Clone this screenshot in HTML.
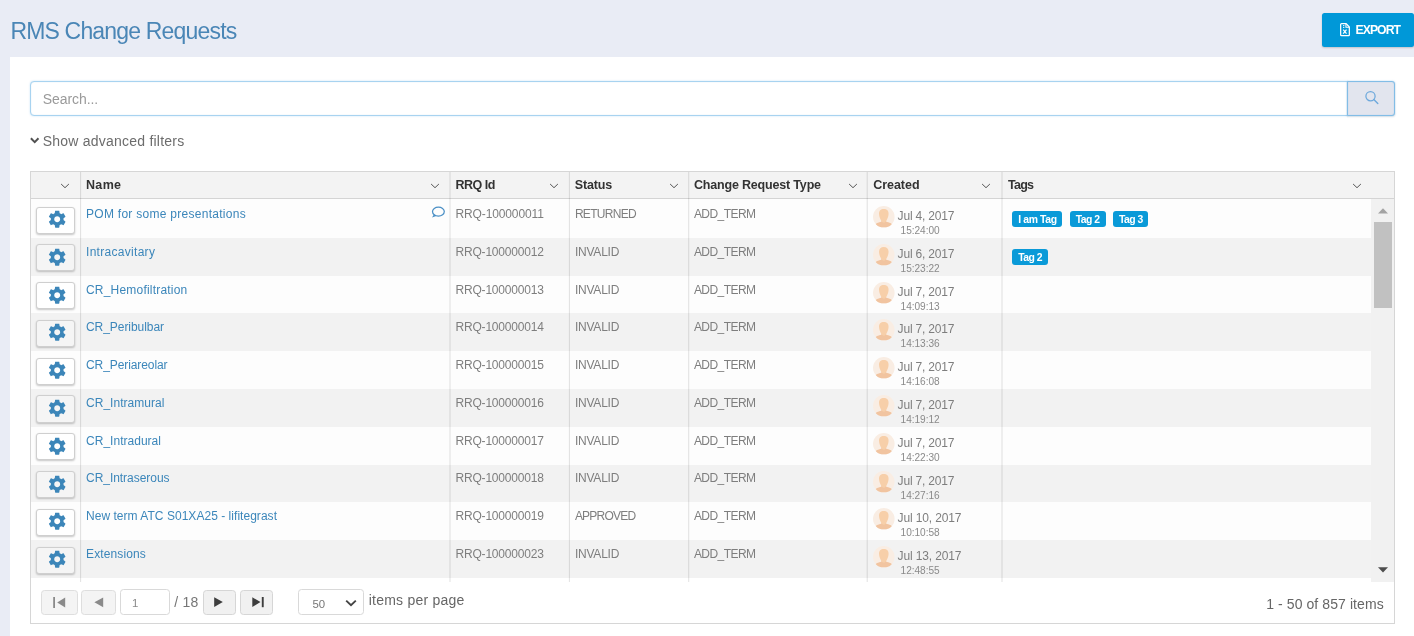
<!DOCTYPE html><html lang="en"><head><meta charset="utf-8"><title>RMS Change Requests</title><style>
html,body{margin:0;padding:0}
body{width:1414px;height:636px;overflow:hidden;background:#e9ecf5;font-family:"Liberation Sans", Arial, sans-serif;position:relative}
.a{position:absolute}
.txt{left:0;top:0;width:1414px;height:636px}
.all{left:0;top:0;width:1460px;height:680px;will-change:transform;filter:blur(.45px)}
.t{position:absolute;white-space:pre;line-height:20px;height:20px}
.panel{left:10px;top:57px;width:1440px;height:613px;background:#fff}
.export{left:1321.6px;top:12.5px;width:92.4px;height:34.6px;background:#0098d8;border-radius:2.5px;box-shadow:0 1px 2px rgba(0,0,0,.18)}
.search{left:30px;top:81px;width:1318px;height:35px;box-sizing:border-box;border:1px solid #a8d3f0;border-radius:4px 0 0 4px;background:#fff;box-shadow:0 0 2px rgba(125,188,235,.45),inset 0 0 1px rgba(125,188,235,.5)}
.sbtn{left:1347.2px;top:81.3px;width:47.8px;height:34.9px;box-sizing:border-box;border:1px solid #82bde6;border-radius:0 3px 3px 0;background:#e2e5ee;box-shadow:0 0 1.5px rgba(110,180,232,.7),inset 0 0 1px rgba(110,180,232,.6),0 1px 2px rgba(0,0,0,.1)}
.grid{left:30.0px;top:171.0px;width:1365.0px;height:453.0px;box-sizing:border-box;border:1px solid #d6d6d6;background:#fff}
.hdr{left:31.0px;top:172.0px;width:1363.0px;height:26.2px;background:#f3f3f3;border-bottom:1px solid #d4d4d4}
.row{left:31.0px;width:1340.3px;height:37.79px}
.r0{background:#fdfdfd} .r1{background:#f2f2f2}
.vl{width:1px;background:#dadada}
.gbtn{left:36.3px;width:38.9px;height:27.2px;box-sizing:border-box;border:1px solid #cfcfcf;border-radius:3px;background:#fff;box-shadow:0 1px 2px rgba(0,0,0,.22)}
.r1 + .gbtn{background:#f4f4f4}
.tag{height:15.8px;background:#0a9ad8;border-radius:3px}
.sb{left:1371.3px;top:199px;width:23.100000000000044px;height:382.6px;background:#f1f1f1}
.thumb{left:1374.2px;top:221.6px;width:17.8px;height:86.2px;background:#c1c1c1}
.pb{top:589.6px;height:25px;box-sizing:border-box;border:1px solid #dedede;border-radius:3.5px;background:#f4f4f4}
.pi{background:#fff;border-color:#d9d9d9;top:589.3px;height:26.1px}
svg{position:absolute;overflow:visible}

</style></head><body><div class="a all">
<div class="a panel"></div>
<div class="a export"></div>
<svg style="left:1339.7px;top:22.5px" width="10" height="13.4" viewBox="0 0 10.6 13.4" preserveAspectRatio="none"><path d="M1.6 .7H6.6L9.9 4V11.9Q9.9 12.7 9.1 12.7H1.6Q.7 12.7 .7 11.9V1.5Q.7 .7 1.6 .7Z" fill="none" stroke="#fff" stroke-width="1.3" stroke-linejoin="round"/><path d="M6.3 .9V4.2H9.7" fill="none" stroke="#fff" stroke-width="1.1"/><path d="M3.4 6.6L6.9 10.6M6.9 6.6L3.4 10.6" stroke="#fff" stroke-width="1.3"/><path d="M3.2 2.6H4.6M3.2 4.4H4.6" stroke="#fff" stroke-width="1"/></svg>
<div class="a search"></div><div class="a sbtn"></div>
<svg style="left:1363px;top:89px" width="18" height="18" viewBox="0 0 18 18"><circle cx="7.5" cy="7.2" r="4.6" fill="none" stroke="#6ea9dc" stroke-width="1.25"/><path d="M10.8 10.5L14.8 14.5" stroke="#6ea9dc" stroke-width="1.4" stroke-linecap="round"/></svg>
<svg style="left:29.9px;top:137.4px" width="9.4" height="7" viewBox="0 0 9.4 7"><path d="M.9 1.3L4.7 5.1L8.5 1.3" fill="none" stroke="#505050" stroke-width="2"/></svg>
<div class="a grid"></div><div class="a hdr"></div>
<div class="a row r0" style="top:199.00px;height:38.89px"></div>
<div class="a gbtn" style="top:206.50px"></div>
<svg style="left:46.8px;top:209.10px" width="20.4" height="20.4" viewBox="0 0 24 24"><path fill="#3c86b9" d="M19.43 12.98c.04-.32.07-.64.07-.98s-.03-.66-.07-.98l2.11-1.65c.19-.15.24-.42.12-.64l-2-3.46c-.12-.22-.39-.3-.61-.22l-2.49 1c-.52-.4-1.08-.73-1.69-.98l-.38-2.65C14.46 2.18 14.25 2 14 2h-4c-.25 0-.46.18-.49.42l-.38 2.65c-.61.25-1.17.59-1.69.98l-2.49-1c-.23-.09-.49 0-.61.22l-2 3.46c-.13.22-.07.49.12.64l2.11 1.65c-.04.32-.07.65-.07.98s.03.66.07.98l-2.11 1.65c-.19.15-.24.42-.12.64l2 3.46c.12.22.39.3.61.22l2.49-1c.52.4 1.08.73 1.69.98l.38 2.65c.03.24.24.42.49.42h4c.25 0 .46-.18.49-.42l.38-2.65c.61-.25 1.17-.59 1.69-.98l2.49 1c.23.09.49 0 .61-.22l2-3.46c.12-.22.07-.49-.12-.64l-2.11-1.65zM12 15.5c-1.93 0-3.5-1.57-3.5-3.5s1.57-3.5 3.5-3.5 3.5 1.57 3.5 3.5-1.57 3.5-3.5 3.5z"/></svg>
<svg style="left:873.35px;top:206.10px" width="21.6" height="21.6" viewBox="0 0 40 40"><defs><clipPath id="c0"><circle cx="20" cy="20" r="20"/></clipPath></defs><circle cx="20" cy="20" r="20" fill="#f9ede3"/><g clip-path="url(#c0)"><path d="M2.5 40C2.5 33 7.5 31.3 14 29.8C16 29.3 16.2 27 16 25H24C23.8 27 24 29.3 26 29.8C32.5 31.3 37.5 33 37.5 40Z" fill="#f1c4a0"/><path d="M20 5.6C25.6 5.6 29.3 9 28.8 15.5C28.4 21 26.6 24 25 26.8C24 28.8 22.3 31 20 31C17.7 31 16 28.8 15 26.8C13.4 24 11.6 21 11.2 15.5C10.7 9 14.4 5.6 20 5.6Z" fill="#f7cfa9"/></g></svg>
<div class="a row r1" style="top:237.89px"></div>
<div class="a gbtn" style="top:244.29px;background:#f5f5f5"></div>
<svg style="left:46.8px;top:246.89px" width="20.4" height="20.4" viewBox="0 0 24 24"><path fill="#3c86b9" d="M19.43 12.98c.04-.32.07-.64.07-.98s-.03-.66-.07-.98l2.11-1.65c.19-.15.24-.42.12-.64l-2-3.46c-.12-.22-.39-.3-.61-.22l-2.49 1c-.52-.4-1.08-.73-1.69-.98l-.38-2.65C14.46 2.18 14.25 2 14 2h-4c-.25 0-.46.18-.49.42l-.38 2.65c-.61.25-1.17.59-1.69.98l-2.49-1c-.23-.09-.49 0-.61.22l-2 3.46c-.13.22-.07.49.12.64l2.11 1.65c-.04.32-.07.65-.07.98s.03.66.07.98l-2.11 1.65c-.19.15-.24.42-.12.64l2 3.46c.12.22.39.3.61.22l2.49-1c.52.4 1.08.73 1.69.98l.38 2.65c.03.24.24.42.49.42h4c.25 0 .46-.18.49-.42l.38-2.65c.61-.25 1.17-.59 1.69-.98l2.49 1c.23.09.49 0 .61-.22l2-3.46c.12-.22.07-.49-.12-.64l-2.11-1.65zM12 15.5c-1.93 0-3.5-1.57-3.5-3.5s1.57-3.5 3.5-3.5 3.5 1.57 3.5 3.5-1.57 3.5-3.5 3.5z"/></svg>
<svg style="left:873.35px;top:243.89px" width="21.6" height="21.6" viewBox="0 0 40 40"><defs><clipPath id="c1"><circle cx="20" cy="20" r="20"/></clipPath></defs><circle cx="20" cy="20" r="20" fill="#f9ede3"/><g clip-path="url(#c1)"><path d="M2.5 40C2.5 33 7.5 31.3 14 29.8C16 29.3 16.2 27 16 25H24C23.8 27 24 29.3 26 29.8C32.5 31.3 37.5 33 37.5 40Z" fill="#f1c4a0"/><path d="M20 5.6C25.6 5.6 29.3 9 28.8 15.5C28.4 21 26.6 24 25 26.8C24 28.8 22.3 31 20 31C17.7 31 16 28.8 15 26.8C13.4 24 11.6 21 11.2 15.5C10.7 9 14.4 5.6 20 5.6Z" fill="#f7cfa9"/></g></svg>
<div class="a row r0" style="top:275.68px"></div>
<div class="a gbtn" style="top:282.08px"></div>
<svg style="left:46.8px;top:284.68px" width="20.4" height="20.4" viewBox="0 0 24 24"><path fill="#3c86b9" d="M19.43 12.98c.04-.32.07-.64.07-.98s-.03-.66-.07-.98l2.11-1.65c.19-.15.24-.42.12-.64l-2-3.46c-.12-.22-.39-.3-.61-.22l-2.49 1c-.52-.4-1.08-.73-1.69-.98l-.38-2.65C14.46 2.18 14.25 2 14 2h-4c-.25 0-.46.18-.49.42l-.38 2.65c-.61.25-1.17.59-1.69.98l-2.49-1c-.23-.09-.49 0-.61.22l-2 3.46c-.13.22-.07.49.12.64l2.11 1.65c-.04.32-.07.65-.07.98s.03.66.07.98l-2.11 1.65c-.19.15-.24.42-.12.64l2 3.46c.12.22.39.3.61.22l2.49-1c.52.4 1.08.73 1.69.98l.38 2.65c.03.24.24.42.49.42h4c.25 0 .46-.18.49-.42l.38-2.65c.61-.25 1.17-.59 1.69-.98l2.49 1c.23.09.49 0 .61-.22l2-3.46c.12-.22.07-.49-.12-.64l-2.11-1.65zM12 15.5c-1.93 0-3.5-1.57-3.5-3.5s1.57-3.5 3.5-3.5 3.5 1.57 3.5 3.5-1.57 3.5-3.5 3.5z"/></svg>
<svg style="left:873.35px;top:281.68px" width="21.6" height="21.6" viewBox="0 0 40 40"><defs><clipPath id="c2"><circle cx="20" cy="20" r="20"/></clipPath></defs><circle cx="20" cy="20" r="20" fill="#f9ede3"/><g clip-path="url(#c2)"><path d="M2.5 40C2.5 33 7.5 31.3 14 29.8C16 29.3 16.2 27 16 25H24C23.8 27 24 29.3 26 29.8C32.5 31.3 37.5 33 37.5 40Z" fill="#f1c4a0"/><path d="M20 5.6C25.6 5.6 29.3 9 28.8 15.5C28.4 21 26.6 24 25 26.8C24 28.8 22.3 31 20 31C17.7 31 16 28.8 15 26.8C13.4 24 11.6 21 11.2 15.5C10.7 9 14.4 5.6 20 5.6Z" fill="#f7cfa9"/></g></svg>
<div class="a row r1" style="top:313.47px"></div>
<div class="a gbtn" style="top:319.87px;background:#f5f5f5"></div>
<svg style="left:46.8px;top:322.47px" width="20.4" height="20.4" viewBox="0 0 24 24"><path fill="#3c86b9" d="M19.43 12.98c.04-.32.07-.64.07-.98s-.03-.66-.07-.98l2.11-1.65c.19-.15.24-.42.12-.64l-2-3.46c-.12-.22-.39-.3-.61-.22l-2.49 1c-.52-.4-1.08-.73-1.69-.98l-.38-2.65C14.46 2.18 14.25 2 14 2h-4c-.25 0-.46.18-.49.42l-.38 2.65c-.61.25-1.17.59-1.69.98l-2.49-1c-.23-.09-.49 0-.61.22l-2 3.46c-.13.22-.07.49.12.64l2.11 1.65c-.04.32-.07.65-.07.98s.03.66.07.98l-2.11 1.65c-.19.15-.24.42-.12.64l2 3.46c.12.22.39.3.61.22l2.49-1c.52.4 1.08.73 1.69.98l.38 2.65c.03.24.24.42.49.42h4c.25 0 .46-.18.49-.42l.38-2.65c.61-.25 1.17-.59 1.69-.98l2.49 1c.23.09.49 0 .61-.22l2-3.46c.12-.22.07-.49-.12-.64l-2.11-1.65zM12 15.5c-1.93 0-3.5-1.57-3.5-3.5s1.57-3.5 3.5-3.5 3.5 1.57 3.5 3.5-1.57 3.5-3.5 3.5z"/></svg>
<svg style="left:873.35px;top:319.47px" width="21.6" height="21.6" viewBox="0 0 40 40"><defs><clipPath id="c3"><circle cx="20" cy="20" r="20"/></clipPath></defs><circle cx="20" cy="20" r="20" fill="#f9ede3"/><g clip-path="url(#c3)"><path d="M2.5 40C2.5 33 7.5 31.3 14 29.8C16 29.3 16.2 27 16 25H24C23.8 27 24 29.3 26 29.8C32.5 31.3 37.5 33 37.5 40Z" fill="#f1c4a0"/><path d="M20 5.6C25.6 5.6 29.3 9 28.8 15.5C28.4 21 26.6 24 25 26.8C24 28.8 22.3 31 20 31C17.7 31 16 28.8 15 26.8C13.4 24 11.6 21 11.2 15.5C10.7 9 14.4 5.6 20 5.6Z" fill="#f7cfa9"/></g></svg>
<div class="a row r0" style="top:351.26px"></div>
<div class="a gbtn" style="top:357.66px"></div>
<svg style="left:46.8px;top:360.26px" width="20.4" height="20.4" viewBox="0 0 24 24"><path fill="#3c86b9" d="M19.43 12.98c.04-.32.07-.64.07-.98s-.03-.66-.07-.98l2.11-1.65c.19-.15.24-.42.12-.64l-2-3.46c-.12-.22-.39-.3-.61-.22l-2.49 1c-.52-.4-1.08-.73-1.69-.98l-.38-2.65C14.46 2.18 14.25 2 14 2h-4c-.25 0-.46.18-.49.42l-.38 2.65c-.61.25-1.17.59-1.69.98l-2.49-1c-.23-.09-.49 0-.61.22l-2 3.46c-.13.22-.07.49.12.64l2.11 1.65c-.04.32-.07.65-.07.98s.03.66.07.98l-2.11 1.65c-.19.15-.24.42-.12.64l2 3.46c.12.22.39.3.61.22l2.49-1c.52.4 1.08.73 1.69.98l.38 2.65c.03.24.24.42.49.42h4c.25 0 .46-.18.49-.42l.38-2.65c.61-.25 1.17-.59 1.69-.98l2.49 1c.23.09.49 0 .61-.22l2-3.46c.12-.22.07-.49-.12-.64l-2.11-1.65zM12 15.5c-1.93 0-3.5-1.57-3.5-3.5s1.57-3.5 3.5-3.5 3.5 1.57 3.5 3.5-1.57 3.5-3.5 3.5z"/></svg>
<svg style="left:873.35px;top:357.26px" width="21.6" height="21.6" viewBox="0 0 40 40"><defs><clipPath id="c4"><circle cx="20" cy="20" r="20"/></clipPath></defs><circle cx="20" cy="20" r="20" fill="#f9ede3"/><g clip-path="url(#c4)"><path d="M2.5 40C2.5 33 7.5 31.3 14 29.8C16 29.3 16.2 27 16 25H24C23.8 27 24 29.3 26 29.8C32.5 31.3 37.5 33 37.5 40Z" fill="#f1c4a0"/><path d="M20 5.6C25.6 5.6 29.3 9 28.8 15.5C28.4 21 26.6 24 25 26.8C24 28.8 22.3 31 20 31C17.7 31 16 28.8 15 26.8C13.4 24 11.6 21 11.2 15.5C10.7 9 14.4 5.6 20 5.6Z" fill="#f7cfa9"/></g></svg>
<div class="a row r1" style="top:389.05px"></div>
<div class="a gbtn" style="top:395.45px;background:#f5f5f5"></div>
<svg style="left:46.8px;top:398.05px" width="20.4" height="20.4" viewBox="0 0 24 24"><path fill="#3c86b9" d="M19.43 12.98c.04-.32.07-.64.07-.98s-.03-.66-.07-.98l2.11-1.65c.19-.15.24-.42.12-.64l-2-3.46c-.12-.22-.39-.3-.61-.22l-2.49 1c-.52-.4-1.08-.73-1.69-.98l-.38-2.65C14.46 2.18 14.25 2 14 2h-4c-.25 0-.46.18-.49.42l-.38 2.65c-.61.25-1.17.59-1.69.98l-2.49-1c-.23-.09-.49 0-.61.22l-2 3.46c-.13.22-.07.49.12.64l2.11 1.65c-.04.32-.07.65-.07.98s.03.66.07.98l-2.11 1.65c-.19.15-.24.42-.12.64l2 3.46c.12.22.39.3.61.22l2.49-1c.52.4 1.08.73 1.69.98l.38 2.65c.03.24.24.42.49.42h4c.25 0 .46-.18.49-.42l.38-2.65c.61-.25 1.17-.59 1.69-.98l2.49 1c.23.09.49 0 .61-.22l2-3.46c.12-.22.07-.49-.12-.64l-2.11-1.65zM12 15.5c-1.93 0-3.5-1.57-3.5-3.5s1.57-3.5 3.5-3.5 3.5 1.57 3.5 3.5-1.57 3.5-3.5 3.5z"/></svg>
<svg style="left:873.35px;top:395.05px" width="21.6" height="21.6" viewBox="0 0 40 40"><defs><clipPath id="c5"><circle cx="20" cy="20" r="20"/></clipPath></defs><circle cx="20" cy="20" r="20" fill="#f9ede3"/><g clip-path="url(#c5)"><path d="M2.5 40C2.5 33 7.5 31.3 14 29.8C16 29.3 16.2 27 16 25H24C23.8 27 24 29.3 26 29.8C32.5 31.3 37.5 33 37.5 40Z" fill="#f1c4a0"/><path d="M20 5.6C25.6 5.6 29.3 9 28.8 15.5C28.4 21 26.6 24 25 26.8C24 28.8 22.3 31 20 31C17.7 31 16 28.8 15 26.8C13.4 24 11.6 21 11.2 15.5C10.7 9 14.4 5.6 20 5.6Z" fill="#f7cfa9"/></g></svg>
<div class="a row r0" style="top:426.84px"></div>
<div class="a gbtn" style="top:433.24px"></div>
<svg style="left:46.8px;top:435.84px" width="20.4" height="20.4" viewBox="0 0 24 24"><path fill="#3c86b9" d="M19.43 12.98c.04-.32.07-.64.07-.98s-.03-.66-.07-.98l2.11-1.65c.19-.15.24-.42.12-.64l-2-3.46c-.12-.22-.39-.3-.61-.22l-2.49 1c-.52-.4-1.08-.73-1.69-.98l-.38-2.65C14.46 2.18 14.25 2 14 2h-4c-.25 0-.46.18-.49.42l-.38 2.65c-.61.25-1.17.59-1.69.98l-2.49-1c-.23-.09-.49 0-.61.22l-2 3.46c-.13.22-.07.49.12.64l2.11 1.65c-.04.32-.07.65-.07.98s.03.66.07.98l-2.11 1.65c-.19.15-.24.42-.12.64l2 3.46c.12.22.39.3.61.22l2.49-1c.52.4 1.08.73 1.69.98l.38 2.65c.03.24.24.42.49.42h4c.25 0 .46-.18.49-.42l.38-2.65c.61-.25 1.17-.59 1.69-.98l2.49 1c.23.09.49 0 .61-.22l2-3.46c.12-.22.07-.49-.12-.64l-2.11-1.65zM12 15.5c-1.93 0-3.5-1.57-3.5-3.5s1.57-3.5 3.5-3.5 3.5 1.57 3.5 3.5-1.57 3.5-3.5 3.5z"/></svg>
<svg style="left:873.35px;top:432.84px" width="21.6" height="21.6" viewBox="0 0 40 40"><defs><clipPath id="c6"><circle cx="20" cy="20" r="20"/></clipPath></defs><circle cx="20" cy="20" r="20" fill="#f9ede3"/><g clip-path="url(#c6)"><path d="M2.5 40C2.5 33 7.5 31.3 14 29.8C16 29.3 16.2 27 16 25H24C23.8 27 24 29.3 26 29.8C32.5 31.3 37.5 33 37.5 40Z" fill="#f1c4a0"/><path d="M20 5.6C25.6 5.6 29.3 9 28.8 15.5C28.4 21 26.6 24 25 26.8C24 28.8 22.3 31 20 31C17.7 31 16 28.8 15 26.8C13.4 24 11.6 21 11.2 15.5C10.7 9 14.4 5.6 20 5.6Z" fill="#f7cfa9"/></g></svg>
<div class="a row r1" style="top:464.63px"></div>
<div class="a gbtn" style="top:471.03px;background:#f5f5f5"></div>
<svg style="left:46.8px;top:473.63px" width="20.4" height="20.4" viewBox="0 0 24 24"><path fill="#3c86b9" d="M19.43 12.98c.04-.32.07-.64.07-.98s-.03-.66-.07-.98l2.11-1.65c.19-.15.24-.42.12-.64l-2-3.46c-.12-.22-.39-.3-.61-.22l-2.49 1c-.52-.4-1.08-.73-1.69-.98l-.38-2.65C14.46 2.18 14.25 2 14 2h-4c-.25 0-.46.18-.49.42l-.38 2.65c-.61.25-1.17.59-1.69.98l-2.49-1c-.23-.09-.49 0-.61.22l-2 3.46c-.13.22-.07.49.12.64l2.11 1.65c-.04.32-.07.65-.07.98s.03.66.07.98l-2.11 1.65c-.19.15-.24.42-.12.64l2 3.46c.12.22.39.3.61.22l2.49-1c.52.4 1.08.73 1.69.98l.38 2.65c.03.24.24.42.49.42h4c.25 0 .46-.18.49-.42l.38-2.65c.61-.25 1.17-.59 1.69-.98l2.49 1c.23.09.49 0 .61-.22l2-3.46c.12-.22.07-.49-.12-.64l-2.11-1.65zM12 15.5c-1.93 0-3.5-1.57-3.5-3.5s1.57-3.5 3.5-3.5 3.5 1.57 3.5 3.5-1.57 3.5-3.5 3.5z"/></svg>
<svg style="left:873.35px;top:470.63px" width="21.6" height="21.6" viewBox="0 0 40 40"><defs><clipPath id="c7"><circle cx="20" cy="20" r="20"/></clipPath></defs><circle cx="20" cy="20" r="20" fill="#f9ede3"/><g clip-path="url(#c7)"><path d="M2.5 40C2.5 33 7.5 31.3 14 29.8C16 29.3 16.2 27 16 25H24C23.8 27 24 29.3 26 29.8C32.5 31.3 37.5 33 37.5 40Z" fill="#f1c4a0"/><path d="M20 5.6C25.6 5.6 29.3 9 28.8 15.5C28.4 21 26.6 24 25 26.8C24 28.8 22.3 31 20 31C17.7 31 16 28.8 15 26.8C13.4 24 11.6 21 11.2 15.5C10.7 9 14.4 5.6 20 5.6Z" fill="#f7cfa9"/></g></svg>
<div class="a row r0" style="top:502.42px"></div>
<div class="a gbtn" style="top:508.82px"></div>
<svg style="left:46.8px;top:511.42px" width="20.4" height="20.4" viewBox="0 0 24 24"><path fill="#3c86b9" d="M19.43 12.98c.04-.32.07-.64.07-.98s-.03-.66-.07-.98l2.11-1.65c.19-.15.24-.42.12-.64l-2-3.46c-.12-.22-.39-.3-.61-.22l-2.49 1c-.52-.4-1.08-.73-1.69-.98l-.38-2.65C14.46 2.18 14.25 2 14 2h-4c-.25 0-.46.18-.49.42l-.38 2.65c-.61.25-1.17.59-1.69.98l-2.49-1c-.23-.09-.49 0-.61.22l-2 3.46c-.13.22-.07.49.12.64l2.11 1.65c-.04.32-.07.65-.07.98s.03.66.07.98l-2.11 1.65c-.19.15-.24.42-.12.64l2 3.46c.12.22.39.3.61.22l2.49-1c.52.4 1.08.73 1.69.98l.38 2.65c.03.24.24.42.49.42h4c.25 0 .46-.18.49-.42l.38-2.65c.61-.25 1.17-.59 1.69-.98l2.49 1c.23.09.49 0 .61-.22l2-3.46c.12-.22.07-.49-.12-.64l-2.11-1.65zM12 15.5c-1.93 0-3.5-1.57-3.5-3.5s1.57-3.5 3.5-3.5 3.5 1.57 3.5 3.5-1.57 3.5-3.5 3.5z"/></svg>
<svg style="left:873.35px;top:508.42px" width="21.6" height="21.6" viewBox="0 0 40 40"><defs><clipPath id="c8"><circle cx="20" cy="20" r="20"/></clipPath></defs><circle cx="20" cy="20" r="20" fill="#f9ede3"/><g clip-path="url(#c8)"><path d="M2.5 40C2.5 33 7.5 31.3 14 29.8C16 29.3 16.2 27 16 25H24C23.8 27 24 29.3 26 29.8C32.5 31.3 37.5 33 37.5 40Z" fill="#f1c4a0"/><path d="M20 5.6C25.6 5.6 29.3 9 28.8 15.5C28.4 21 26.6 24 25 26.8C24 28.8 22.3 31 20 31C17.7 31 16 28.8 15 26.8C13.4 24 11.6 21 11.2 15.5C10.7 9 14.4 5.6 20 5.6Z" fill="#f7cfa9"/></g></svg>
<div class="a row r1" style="top:540.21px"></div>
<div class="a gbtn" style="top:546.61px;background:#f5f5f5"></div>
<svg style="left:46.8px;top:549.21px" width="20.4" height="20.4" viewBox="0 0 24 24"><path fill="#3c86b9" d="M19.43 12.98c.04-.32.07-.64.07-.98s-.03-.66-.07-.98l2.11-1.65c.19-.15.24-.42.12-.64l-2-3.46c-.12-.22-.39-.3-.61-.22l-2.49 1c-.52-.4-1.08-.73-1.69-.98l-.38-2.65C14.46 2.18 14.25 2 14 2h-4c-.25 0-.46.18-.49.42l-.38 2.65c-.61.25-1.17.59-1.69.98l-2.49-1c-.23-.09-.49 0-.61.22l-2 3.46c-.13.22-.07.49.12.64l2.11 1.65c-.04.32-.07.65-.07.98s.03.66.07.98l-2.11 1.65c-.19.15-.24.42-.12.64l2 3.46c.12.22.39.3.61.22l2.49-1c.52.4 1.08.73 1.69.98l.38 2.65c.03.24.24.42.49.42h4c.25 0 .46-.18.49-.42l.38-2.65c.61-.25 1.17-.59 1.69-.98l2.49 1c.23.09.49 0 .61-.22l2-3.46c.12-.22.07-.49-.12-.64l-2.11-1.65zM12 15.5c-1.93 0-3.5-1.57-3.5-3.5s1.57-3.5 3.5-3.5 3.5 1.57 3.5 3.5-1.57 3.5-3.5 3.5z"/></svg>
<svg style="left:873.35px;top:546.21px" width="21.6" height="21.6" viewBox="0 0 40 40"><defs><clipPath id="c9"><circle cx="20" cy="20" r="20"/></clipPath></defs><circle cx="20" cy="20" r="20" fill="#f9ede3"/><g clip-path="url(#c9)"><path d="M2.5 40C2.5 33 7.5 31.3 14 29.8C16 29.3 16.2 27 16 25H24C23.8 27 24 29.3 26 29.8C32.5 31.3 37.5 33 37.5 40Z" fill="#f1c4a0"/><path d="M20 5.6C25.6 5.6 29.3 9 28.8 15.5C28.4 21 26.6 24 25 26.8C24 28.8 22.3 31 20 31C17.7 31 16 28.8 15 26.8C13.4 24 11.6 21 11.2 15.5C10.7 9 14.4 5.6 20 5.6Z" fill="#f7cfa9"/></g></svg>
<svg style="left:431px;top:206.30px" width="15" height="13" viewBox="0 0 15 13"><ellipse cx="7.4" cy="5.6" rx="5.9" ry="4.5" fill="none" stroke="#4a8fc5" stroke-width="1.25"/><path d="M2.9 8.4L1 11.6L5.3 9.9Z" fill="#4a8fc5"/></svg>
<div class="a" style="left:80px;top:172.0px;width:1px;height:409.5px;background:rgba(0,0,0,0.104)"></div>
<div class="a" style="left:81px;top:172.0px;width:1px;height:409.5px;background:rgba(0,0,0,0.011)"></div>
<div class="a" style="left:449px;top:172.0px;width:1px;height:409.5px;background:rgba(0,0,0,0.058)"></div>
<div class="a" style="left:450px;top:172.0px;width:1px;height:409.5px;background:rgba(0,0,0,0.058)"></div>
<div class="a" style="left:568px;top:172.0px;width:1px;height:409.5px;background:rgba(0,0,0,0.012)"></div>
<div class="a" style="left:569px;top:172.0px;width:1px;height:409.5px;background:rgba(0,0,0,0.103)"></div>
<div class="a" style="left:688px;top:172.0px;width:1px;height:409.5px;background:rgba(0,0,0,0.092)"></div>
<div class="a" style="left:689px;top:172.0px;width:1px;height:409.5px;background:rgba(0,0,0,0.023)"></div>
<div class="a" style="left:866px;top:172.0px;width:1px;height:409.5px;background:rgba(0,0,0,0.034)"></div>
<div class="a" style="left:867px;top:172.0px;width:1px;height:409.5px;background:rgba(0,0,0,0.081)"></div>
<div class="a" style="left:1001px;top:172.0px;width:1px;height:409.5px;background:rgba(0,0,0,0.058)"></div>
<div class="a" style="left:1002px;top:172.0px;width:1px;height:409.5px;background:rgba(0,0,0,0.058)"></div>
<svg style="left:60.3px;top:182.5px" width="10" height="7" viewBox="0 0 10 7"><path d="M1.1 1L5 4.7L8.9 1" fill="none" stroke="#555" stroke-width="1"/></svg>
<svg style="left:429.7px;top:182.5px" width="10" height="7" viewBox="0 0 10 7"><path d="M1.1 1L5 4.7L8.9 1" fill="none" stroke="#555" stroke-width="1"/></svg>
<svg style="left:549.1px;top:182.5px" width="10" height="7" viewBox="0 0 10 7"><path d="M1.1 1L5 4.7L8.9 1" fill="none" stroke="#555" stroke-width="1"/></svg>
<svg style="left:668.5px;top:182.5px" width="10" height="7" viewBox="0 0 10 7"><path d="M1.1 1L5 4.7L8.9 1" fill="none" stroke="#555" stroke-width="1"/></svg>
<svg style="left:847.6px;top:182.5px" width="10" height="7" viewBox="0 0 10 7"><path d="M1.1 1L5 4.7L8.9 1" fill="none" stroke="#555" stroke-width="1"/></svg>
<svg style="left:981.4px;top:182.5px" width="10" height="7" viewBox="0 0 10 7"><path d="M1.1 1L5 4.7L8.9 1" fill="none" stroke="#555" stroke-width="1"/></svg>
<svg style="left:1352.2px;top:182.5px" width="10" height="7" viewBox="0 0 10 7"><path d="M1.1 1L5 4.7L8.9 1" fill="none" stroke="#555" stroke-width="1"/></svg>
<div class="a tag" style="left:1012.2px;top:211.30px;width:50.2px"></div>
<div class="a tag" style="left:1069.6px;top:211.30px;width:36.1px"></div>
<div class="a tag" style="left:1112.8px;top:211.30px;width:35.2px"></div>
<div class="a tag" style="left:1012.2px;top:249.09px;width:36.0px"></div>
<div class="a sb"></div><div class="a thumb"></div>
<svg style="left:1377.8px;top:207.6px" width="10" height="6" viewBox="0 0 10 6"><path d="M0 5.4L5 .2L10 5.4Z" fill="#a3a3a3"/></svg>
<svg style="left:1377.8px;top:567.3px" width="10" height="6" viewBox="0 0 10 6"><path d="M0 .3L5 5.6L10 .3Z" fill="#4d4d4d"/></svg>
<div class="a pb" style="left:41.4px;width:36.3px"></div>
<div class="a pb" style="left:81.4px;width:34.4px"></div>
<div class="a pb pi" style="left:120.2px;width:49.9px"></div>
<div class="a pb" style="left:202.9px;width:33.1px;background:#f1f1f1;border-color:#d6d6d6"></div>
<div class="a pb" style="left:240.2px;width:33.2px;background:#f1f1f1;border-color:#d6d6d6"></div>
<div class="a pb pi" style="left:297.5px;width:66.3px"></div>
<svg style="left:52.8px;top:597.2px" width="13" height="11" viewBox="0 0 13 11"><rect x=".2" y="0" width="1.8" height="11" fill="#8a8a8a"/><path d="M12.2 .6V10.4L4.2 5.5Z" fill="#8a8a8a"/></svg>
<svg style="left:94.2px;top:597.4px" width="10" height="11" viewBox="0 0 10 11"><path d="M9.2 .4V10.2L.4 5.3Z" fill="#8a8a8a"/></svg>
<svg style="left:214px;top:597.3px" width="10" height="11" viewBox="0 0 10 11"><path d="M.2 .2V10L8.8 5.1Z" fill="#3d3d3d"/></svg>
<svg style="left:252px;top:597.3px" width="13" height="11" viewBox="0 0 13 11"><path d="M.3 .2V10L8.5 5.1Z" fill="#3d3d3d"/><rect x="9.8" y="0" width="1.9" height="10.2" fill="#3d3d3d"/></svg>
<svg style="left:344.8px;top:598.6px" width="12" height="8" viewBox="0 0 12 8"><path d="M1.2 1.6L6 6.2L10.8 1.6" fill="none" stroke="#444" stroke-width="1.9"/></svg>
<div class="a txt">
<span class="t" style="left:10.40px;top:21.03px;font-size:23.0px;letter-spacing:-0.822px;color:#4a86b6">RMS Change Requests</span>
<span class="t" style="left:42.80px;top:89.05px;font-size:14.0px;letter-spacing:-0.081px;color:#9a9a9a">Search...</span>
<span class="t" style="left:42.80px;top:131.25px;font-size:14.0px;letter-spacing:0.221px;color:#6c6c6c">Show advanced filters</span>
<span class="t" style="left:1355.60px;top:19.77px;font-size:12.2px;letter-spacing:-0.954px;color:#ffffff;font-weight:700">EXPORT</span>
<span class="t" style="left:86.00px;top:174.57px;font-size:12.5px;letter-spacing:0.338px;color:#333333;font-weight:700">Name</span>
<span class="t" style="left:455.40px;top:174.57px;font-size:12.5px;letter-spacing:-0.493px;color:#333333;font-weight:700">RRQ Id</span>
<span class="t" style="left:574.80px;top:174.57px;font-size:12.5px;letter-spacing:-0.167px;color:#333333;font-weight:700">Status</span>
<span class="t" style="left:693.90px;top:174.57px;font-size:12.5px;letter-spacing:-0.177px;color:#333333;font-weight:700">Change Request Type</span>
<span class="t" style="left:873.20px;top:174.57px;font-size:12.5px;letter-spacing:-0.035px;color:#333333;font-weight:700">Created</span>
<span class="t" style="left:1008.10px;top:174.57px;font-size:12.5px;letter-spacing:-0.763px;color:#333333;font-weight:700">Tags</span>
<span class="t" style="left:86.00px;top:203.94px;font-size:12.0px;letter-spacing:0.279px;color:#3b86ba">POM for some presentations</span>
<span class="t" style="left:455.50px;top:203.94px;font-size:12.0px;letter-spacing:-0.126px;color:#7e7e7e">RRQ-100000011</span>
<span class="t" style="left:574.90px;top:203.94px;font-size:12.0px;letter-spacing:-0.709px;color:#7e7e7e">RETURNED</span>
<span class="t" style="left:693.90px;top:203.94px;font-size:12.0px;letter-spacing:-0.552px;color:#7e7e7e">ADD_TERM</span>
<span class="t" style="left:897.60px;top:206.04px;font-size:12.0px;letter-spacing:-0.193px;color:#7e7e7e">Jul 4, 2017</span>
<span class="t" style="left:900.60px;top:221.00px;font-size:10.1px;letter-spacing:-0.037px;color:#8a8a8a">15:24:00</span>
<span class="t" style="left:86.00px;top:241.73px;font-size:12.0px;letter-spacing:0.295px;color:#3b86ba">Intracavitary</span>
<span class="t" style="left:455.50px;top:241.73px;font-size:12.0px;letter-spacing:-0.195px;color:#7e7e7e">RRQ-100000012</span>
<span class="t" style="left:574.90px;top:241.73px;font-size:12.0px;letter-spacing:-0.214px;color:#7e7e7e">INVALID</span>
<span class="t" style="left:693.90px;top:241.73px;font-size:12.0px;letter-spacing:-0.552px;color:#7e7e7e">ADD_TERM</span>
<span class="t" style="left:897.60px;top:243.83px;font-size:12.0px;letter-spacing:-0.193px;color:#7e7e7e">Jul 6, 2017</span>
<span class="t" style="left:900.60px;top:258.79px;font-size:10.1px;letter-spacing:-0.037px;color:#8a8a8a">15:23:22</span>
<span class="t" style="left:86.00px;top:279.52px;font-size:12.0px;letter-spacing:0.197px;color:#3b86ba">CR_Hemofiltration</span>
<span class="t" style="left:455.50px;top:279.52px;font-size:12.0px;letter-spacing:-0.195px;color:#7e7e7e">RRQ-100000013</span>
<span class="t" style="left:574.90px;top:279.52px;font-size:12.0px;letter-spacing:-0.214px;color:#7e7e7e">INVALID</span>
<span class="t" style="left:693.90px;top:279.52px;font-size:12.0px;letter-spacing:-0.552px;color:#7e7e7e">ADD_TERM</span>
<span class="t" style="left:897.60px;top:281.62px;font-size:12.0px;letter-spacing:-0.193px;color:#7e7e7e">Jul 7, 2017</span>
<span class="t" style="left:900.60px;top:296.58px;font-size:10.1px;letter-spacing:-0.037px;color:#8a8a8a">14:09:13</span>
<span class="t" style="left:86.00px;top:317.31px;font-size:12.0px;letter-spacing:-0.054px;color:#3b86ba">CR_Peribulbar</span>
<span class="t" style="left:455.50px;top:317.31px;font-size:12.0px;letter-spacing:-0.195px;color:#7e7e7e">RRQ-100000014</span>
<span class="t" style="left:574.90px;top:317.31px;font-size:12.0px;letter-spacing:-0.214px;color:#7e7e7e">INVALID</span>
<span class="t" style="left:693.90px;top:317.31px;font-size:12.0px;letter-spacing:-0.552px;color:#7e7e7e">ADD_TERM</span>
<span class="t" style="left:897.60px;top:319.41px;font-size:12.0px;letter-spacing:-0.193px;color:#7e7e7e">Jul 7, 2017</span>
<span class="t" style="left:900.60px;top:334.37px;font-size:10.1px;letter-spacing:-0.037px;color:#8a8a8a">14:13:36</span>
<span class="t" style="left:86.00px;top:355.10px;font-size:12.0px;letter-spacing:-0.086px;color:#3b86ba">CR_Periareolar</span>
<span class="t" style="left:455.50px;top:355.10px;font-size:12.0px;letter-spacing:-0.195px;color:#7e7e7e">RRQ-100000015</span>
<span class="t" style="left:574.90px;top:355.10px;font-size:12.0px;letter-spacing:-0.214px;color:#7e7e7e">INVALID</span>
<span class="t" style="left:693.90px;top:355.10px;font-size:12.0px;letter-spacing:-0.552px;color:#7e7e7e">ADD_TERM</span>
<span class="t" style="left:897.60px;top:357.20px;font-size:12.0px;letter-spacing:-0.193px;color:#7e7e7e">Jul 7, 2017</span>
<span class="t" style="left:900.60px;top:372.16px;font-size:10.1px;letter-spacing:-0.037px;color:#8a8a8a">14:16:08</span>
<span class="t" style="left:86.00px;top:392.89px;font-size:12.0px;letter-spacing:0.036px;color:#3b86ba">CR_Intramural</span>
<span class="t" style="left:455.50px;top:392.89px;font-size:12.0px;letter-spacing:-0.195px;color:#7e7e7e">RRQ-100000016</span>
<span class="t" style="left:574.90px;top:392.89px;font-size:12.0px;letter-spacing:-0.214px;color:#7e7e7e">INVALID</span>
<span class="t" style="left:693.90px;top:392.89px;font-size:12.0px;letter-spacing:-0.552px;color:#7e7e7e">ADD_TERM</span>
<span class="t" style="left:897.60px;top:394.99px;font-size:12.0px;letter-spacing:-0.193px;color:#7e7e7e">Jul 7, 2017</span>
<span class="t" style="left:900.60px;top:409.95px;font-size:10.1px;letter-spacing:-0.037px;color:#8a8a8a">14:19:12</span>
<span class="t" style="left:86.00px;top:430.68px;font-size:12.0px;letter-spacing:0.023px;color:#3b86ba">CR_Intradural</span>
<span class="t" style="left:455.50px;top:430.68px;font-size:12.0px;letter-spacing:-0.195px;color:#7e7e7e">RRQ-100000017</span>
<span class="t" style="left:574.90px;top:430.68px;font-size:12.0px;letter-spacing:-0.214px;color:#7e7e7e">INVALID</span>
<span class="t" style="left:693.90px;top:430.68px;font-size:12.0px;letter-spacing:-0.552px;color:#7e7e7e">ADD_TERM</span>
<span class="t" style="left:897.60px;top:432.78px;font-size:12.0px;letter-spacing:-0.193px;color:#7e7e7e">Jul 7, 2017</span>
<span class="t" style="left:900.60px;top:447.74px;font-size:10.1px;letter-spacing:-0.037px;color:#8a8a8a">14:22:30</span>
<span class="t" style="left:86.00px;top:468.47px;font-size:12.0px;letter-spacing:-0.039px;color:#3b86ba">CR_Intraserous</span>
<span class="t" style="left:455.50px;top:468.47px;font-size:12.0px;letter-spacing:-0.195px;color:#7e7e7e">RRQ-100000018</span>
<span class="t" style="left:574.90px;top:468.47px;font-size:12.0px;letter-spacing:-0.214px;color:#7e7e7e">INVALID</span>
<span class="t" style="left:693.90px;top:468.47px;font-size:12.0px;letter-spacing:-0.552px;color:#7e7e7e">ADD_TERM</span>
<span class="t" style="left:897.60px;top:470.57px;font-size:12.0px;letter-spacing:-0.193px;color:#7e7e7e">Jul 7, 2017</span>
<span class="t" style="left:900.60px;top:485.53px;font-size:10.1px;letter-spacing:-0.037px;color:#8a8a8a">14:27:16</span>
<span class="t" style="left:86.00px;top:506.26px;font-size:12.0px;letter-spacing:0.034px;color:#3b86ba">New term ATC S01XA25 - lifitegrast</span>
<span class="t" style="left:455.50px;top:506.26px;font-size:12.0px;letter-spacing:-0.195px;color:#7e7e7e">RRQ-100000019</span>
<span class="t" style="left:574.90px;top:506.26px;font-size:12.0px;letter-spacing:-0.773px;color:#7e7e7e">APPROVED</span>
<span class="t" style="left:693.90px;top:506.26px;font-size:12.0px;letter-spacing:-0.552px;color:#7e7e7e">ADD_TERM</span>
<span class="t" style="left:897.60px;top:508.36px;font-size:12.0px;letter-spacing:-0.133px;color:#7e7e7e">Jul 10, 2017</span>
<span class="t" style="left:900.60px;top:523.32px;font-size:10.1px;letter-spacing:-0.037px;color:#8a8a8a">10:10:58</span>
<span class="t" style="left:86.00px;top:544.05px;font-size:12.0px;letter-spacing:0.130px;color:#3b86ba">Extensions</span>
<span class="t" style="left:455.50px;top:544.05px;font-size:12.0px;letter-spacing:-0.195px;color:#7e7e7e">RRQ-100000023</span>
<span class="t" style="left:574.90px;top:544.05px;font-size:12.0px;letter-spacing:-0.214px;color:#7e7e7e">INVALID</span>
<span class="t" style="left:693.90px;top:544.05px;font-size:12.0px;letter-spacing:-0.552px;color:#7e7e7e">ADD_TERM</span>
<span class="t" style="left:897.60px;top:546.15px;font-size:12.0px;letter-spacing:-0.133px;color:#7e7e7e">Jul 13, 2017</span>
<span class="t" style="left:900.60px;top:561.11px;font-size:10.1px;letter-spacing:-0.037px;color:#8a8a8a">12:48:55</span>
<span class="t" style="left:1018.30px;top:209.80px;font-size:10.4px;letter-spacing:-0.386px;color:#ffffff;font-weight:700">I am Tag</span>
<span class="t" style="left:1075.80px;top:209.80px;font-size:10.4px;letter-spacing:-0.515px;color:#ffffff;font-weight:700">Tag 2</span>
<span class="t" style="left:1119.00px;top:209.80px;font-size:10.4px;letter-spacing:-0.515px;color:#ffffff;font-weight:700">Tag 3</span>
<span class="t" style="left:1018.30px;top:247.59px;font-size:10.4px;letter-spacing:-0.515px;color:#ffffff;font-weight:700">Tag 2</span>
<span class="t" style="left:131.90px;top:592.65px;font-size:11.4px;letter-spacing:0.000px;color:#8a8a8a">1</span>
<span class="t" style="left:174.20px;top:592.35px;font-size:14.0px;letter-spacing:0.235px;color:#767676">/ 18</span>
<span class="t" style="left:312.40px;top:593.65px;font-size:11.4px;letter-spacing:-0.086px;color:#777777">50</span>
<span class="t" style="left:368.70px;top:590.45px;font-size:14.0px;letter-spacing:0.228px;color:#666666">items per page</span>
<span class="t" style="left:1266.20px;top:594.45px;font-size:14.0px;letter-spacing:0.087px;color:#666666">1 - 50 of 857 items</span>
</div>
</div></body></html>
